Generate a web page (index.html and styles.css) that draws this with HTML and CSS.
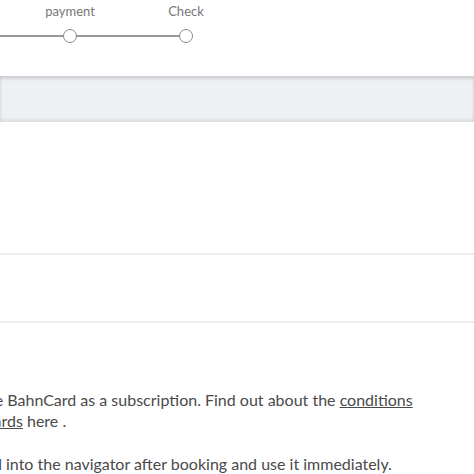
FILE: index.html
```html
<!DOCTYPE html>
<html lang="en">
<head>
    <meta charset="UTF-8">
    <meta name="viewport" content="width=device-width, initial-scale=1.0">
    <title>BahnCard - Check</title>
    <link rel="stylesheet" href="styles.css">
</head>
<body>
    <div class="stepper">
        <div class="step">
            <span class="step-label">Personal data</span>
            <span class="step-dot"></span>
        </div>
        <div class="step">
            <span class="step-label">payment</span>
            <span class="step-dot"></span>
        </div>
        <div class="step">
            <span class="step-label">Check</span>
            <span class="step-dot"></span>
        </div>
    </div>

    <div class="tab-bar"></div>

    <div class="row row-large"></div>
    <div class="row row-small"></div>

    <div class="info">
        <p class="info-first">You can also book the BahnCard as a subscription. Find out about the <a href="#">conditions</a><br><a href="#">for BahnCards</a> here .</p>
        <p class="info-second">Load the BahnCard into the navigator after booking and use it immediately.</p>
    </div>
</body>
</html>
```

FILE: styles.css
```css
body {
    margin: 0;
    background: #fff;
    font-family: Lato, "Liberation Sans", sans-serif;
    color: #4a4a4a;
    overflow: hidden;
}

/* progress steps, the first ones are cut off on the left */
.stepper {
    display: flex;
    height: 76px;
    margin-left: -104px;
    padding-top: 3px;
    box-sizing: border-box;
}

.step {
    position: relative;
    width: 116px;
    display: flex;
    flex-direction: column;
    align-items: center;
}

.step::before {
    content: "";
    position: absolute;
    top: 32px;
    left: -58px;
    width: 116px;
    height: 1.5px;
    background: #999;
}

.step-label {
    font-size: 13px;
    line-height: 16px;
    color: #777;
}

.step-dot {
    position: relative;
    z-index: 1;
    width: 14px;
    height: 14px;
    margin-top: 10px;
    border: 1.5px solid #8a8a8a;
    border-radius: 50%;
    background: #fff;
    box-sizing: border-box;
}

.tab-bar {
    height: 46px;
    background: #eef1f4;
    box-shadow: inset 0 3px 3px rgba(0, 0, 0, 0.13), inset 0 -3px 3px rgba(0, 0, 0, 0.07);
}

.row {
    border-bottom: 2px solid #ececec;
}

.row-large {
    height: 131px;
}

.row-small {
    height: 66px;
}

.info {
    padding-top: 66px;
    margin-left: -77px;
}

.info p {
    margin: 0;
    font-size: 16px;
    line-height: 21px;
}

.info-first {
    text-indent: -73px;
}

.info-second {
    margin-top: 22px !important;
    text-indent: -55px;
}

.info a {
    color: #4a4a4a;
    text-decoration: underline;
}
```
